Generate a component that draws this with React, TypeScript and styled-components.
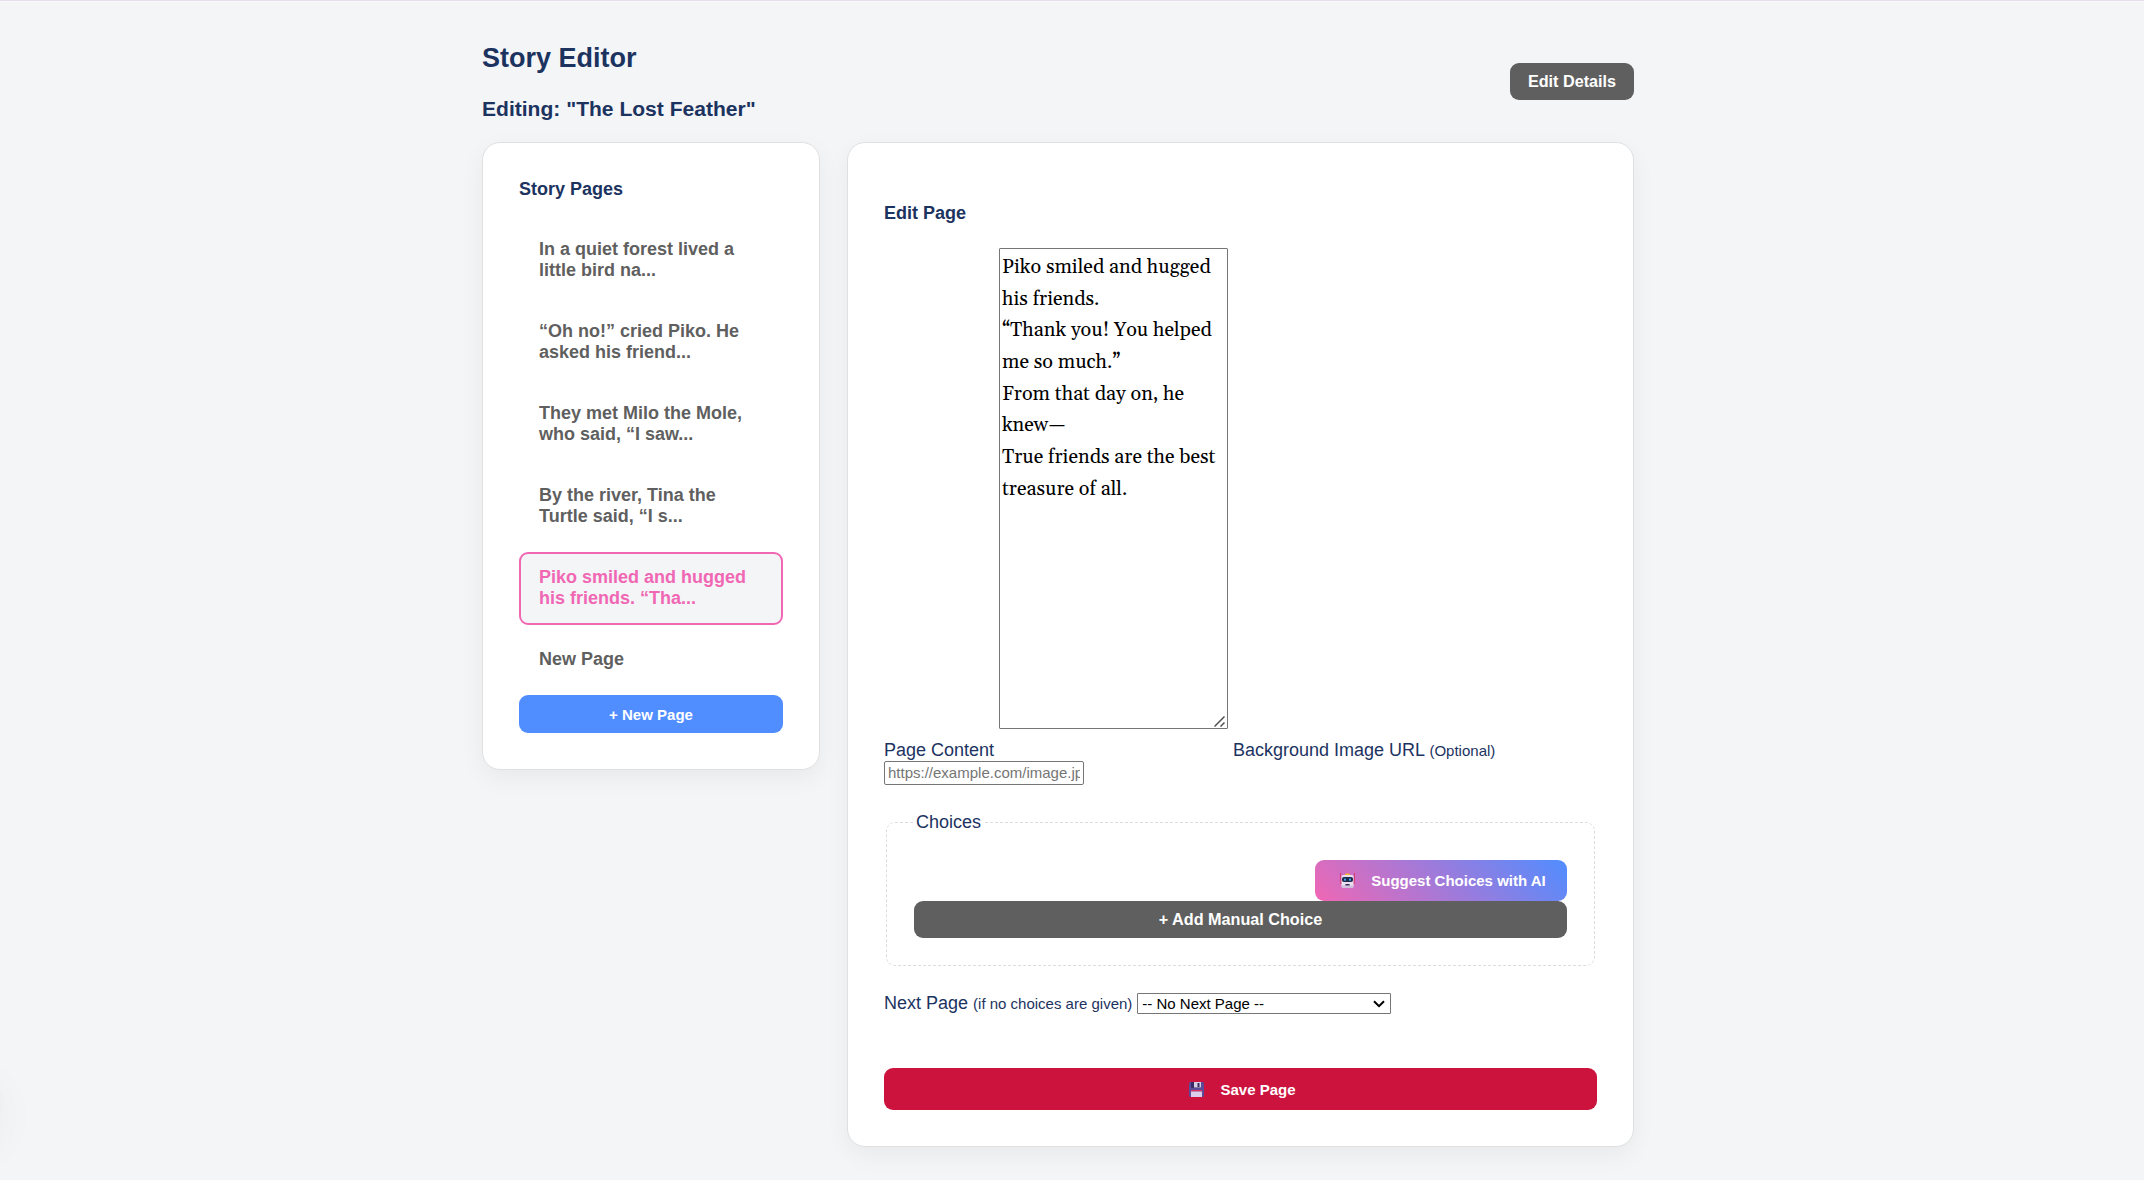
import React from 'react';
import styled, { createGlobalStyle, css } from 'styled-components';

const GlobalStyle = createGlobalStyle`
  *, *::before, *::after { box-sizing: border-box; }
  html, body { margin: 0; }
  body {
    background: #f4f5f7;
    color: #1c335f;
    font-family: Arial, "Liberation Sans", sans-serif;
    font-size: 18px;
    overflow: hidden;
  }
`;

const Page = styled.main`
  height: 1180px;
  border-top: 1px solid #e6dcea;
  box-shadow: inset 0 1px #fafafc;
  overflow: hidden;
`;

const Container = styled.div`
  width: 1152px;
  margin-left: 482px;
`;

const Header = styled.header`
  display: flex;
  justify-content: space-between;
  align-items: center;
  height: 141px;
  padding: 41px 0 21px;
`;

const Title = styled.h2`
  font-size: 27px;
  line-height: 33px;
  margin: 0 0 22px;
`;

const Subtitle = styled.h3`
  font-size: 21.06px;
  line-height: 24px;
  margin: 0;
`;

const Columns = styled.div`
  display: grid;
  grid-template-columns: 338px 787px;
  gap: 27px;
  align-items: start;
`;

const Card = styled.section<{ $top?: number }>`
  background: #fff;
  border: 1px solid #e0e0e0;
  border-radius: 18px;
  padding: ${(p) => p.$top ?? 36}px 36px 36px;
  box-shadow: 0 8px 24px rgba(0, 0, 0, 0.05);
  min-width: 0;
`;

const SectionTitle = styled.h4`
  font-size: 18px;
  line-height: 20px;
  margin: 0;
`;

const PageList = styled.ul`
  list-style: none;
  margin: 25px 0 9px;
  padding: 0;
  display: flex;
  flex-direction: column;
  gap: 9px;
`;

const PageItem = styled.li<{ $active?: boolean }>`
  border: 2px solid transparent;
  border-radius: 9px;
  padding: 13px 18px 14px;
  font-weight: bold;
  line-height: 21px;
  color: #5f5f5f;
  ${(p) =>
    p.$active &&
    css`
      border-color: #f067b4;
      background: #f4f5f7;
      color: #f067b4;
    `}
`;

type Tone = 'grey' | 'blue' | 'red' | 'gradient';
const tones: Record<Tone, string> = {
  grey: '#5f5f5f',
  blue: '#508dff',
  red: '#cc133e',
  gradient: 'linear-gradient(45deg, #f067b4, #508dff)',
};

const Button = styled.button<{ $tone: Tone; $h: number; $w?: string; $size?: number }>`
  display: flex;
  align-items: center;
  justify-content: center;
  width: ${(p) => p.$w ?? '100%'};
  height: ${(p) => p.$h}px;
  padding: 0;
  border: 0;
  border-radius: 9px;
  background: ${(p) => tones[p.$tone]};
  color: #fff;
  font: bold ${(p) => p.$size ?? 15}px Arial, "Liberation Sans", sans-serif;
`;

const Icon = styled.svg`
  width: 15px;
  height: 15px;
  margin: 0 16px 0 4px;
  flex: none;
`;

const Fields = styled.div`
  margin-top: 25px;
  line-height: 20px;
`;

const ContentRow = styled.div`
  display: flex;
  align-items: flex-end;
  height: 513px;
`;

const FieldLabel = styled.label<{ $w?: number }>`
  width: ${(p) => (p.$w ? `${p.$w}px` : 'auto')};
  padding-bottom: 1px;
  white-space: nowrap;
`;

const StoryBox = styled.div`
  position: relative;
  align-self: flex-start;
  width: 229px;
  height: 481px;
  margin-right: 5px;
`;

const Story = styled.textarea`
  display: block;
  width: 100%;
  height: 100%;
  padding: 3px 2px 2px;
  border: 1px solid #767676;
  border-radius: 1px;
  color: #000;
  background: #fff;
  font-family: Georgia, Gelasio, "Liberation Serif", serif;
  font-size: 19.8px;
  line-height: 31.68px;
  white-space: pre;
  overflow: hidden;
  resize: none;
`;

const Grip = styled.svg`
  position: absolute;
  right: 3px;
  bottom: 2px;
  width: 11px;
  height: 11px;
  pointer-events: none;
`;

const Small = styled.small`
  font-size: 15px;
  line-height: 1;
`;

const UrlInput = styled.input`
  display: block;
  width: 200px;
  height: 24px;
  padding: 0 3px 2px;
  border: 1px solid #767676;
  border-radius: 2px;
  font: 15px Arial, "Liberation Sans", sans-serif;
  &::placeholder { color: #757575; }
`;

const Choices = styled.fieldset`
  margin: 27px 2px 0;
  padding: 27px;
  border: 1px dashed #dcdcdc;
  border-radius: 9px;
`;

const Legend = styled.legend`
  padding: 0 2px;
  line-height: 21px;
`;

const SuggestRow = styled.div`
  display: flex;
  justify-content: flex-end;
`;

const NextRow = styled.div`
  display: flex;
  align-items: center;
  height: 21px;
  margin: 27px 0 54px;
  gap: 5px;
`;

const SelectBox = styled.div`
  position: relative;
  width: 254px;
  height: 21px;
`;

const Select = styled.select`
  appearance: none;
  display: block;
  width: 100%;
  height: 100%;
  padding: 0 4px;
  border: 1px solid #767676;
  border-radius: 1px;
  background: #fff;
  color: #000;
  font: 15px Arial, "Liberation Sans", sans-serif;
`;

const Chevron = styled.svg`
  position: absolute;
  right: 6px;
  top: 7px;
  width: 12px;
  height: 8px;
  pointer-events: none;
`;

const FloatingWidget = styled.div`
  position: fixed;
  left: -62px;
  top: 1070px;
  width: 60px;
  height: 60px;
  border-radius: 50%;
  background: #fff;
  box-shadow: 0 2px 16px rgba(0, 0, 0, 0.04), 0 16px 48px rgba(0, 0, 0, 0.06);
`;

const RobotIcon = () => (
  <Icon viewBox="0 0 15 15">
    <path d="M.5 0v10M14.5 0v10" stroke="#d93a72" strokeWidth="1" />
    <path d="M0 7h2v4H0zM13 7h2v4h-2z" fill="#d84a80" />
    <path d="M4.500 2.200C5 .9 6 .5 7.500 .5s2.500.4 3 1.700z" fill="#f5b921" />
    <rect x="1.500" y="2" width="12" height="12.800" rx="1.500" fill="#e8dff0" />
    <path d="M2 12.500h11V14a1 1 0 0 1-1 1H3a1 1 0 0 1-1-1z" fill="#cfc0de" />
    <rect x="2" y="4" width="11" height="5" rx="2" fill="#202b4c" />
    <rect x="4" y="5.500" width="2" height="2.200" rx=".6" fill="#42a5ec" />
    <rect x="9" y="5.500" width="2" height="2.200" rx=".6" fill="#42a5ec" />
    <rect x="5.300" y="11" width="4.400" height="1.600" rx=".5" fill="#3c2c59" />
  </Icon>
);

const FloppyIcon = () => (
  <Icon viewBox="0 0 15 15">
    <path d="M1.500 0h12A1.500 1.500 0 0 1 15 1.500v12a1.500 1.500 0 0 1-1.500 1.500h-12A1.500 1.500 0 0 1 0 13.500v-12A1.500 1.500 0 0 1 1.500 0z" fill="#5b4a99" />
    <path d="M2 0h10v6H3a1 1 0 0 1-1-1z" fill="#3a2b66" />
    <path d="M5 0h7v5.500H5z" fill="#d5cde2" />
    <path d="M8.500 1h2v4h-2z" fill="#3a2b66" />
    <path d="M2 8h11v1.500H2z" fill="#e0315f" />
    <path d="M2 9.500h11V15H2z" fill="#dccdeb" />
  </Icon>
);

const pages = [
  'In a quiet forest lived a little bird na...',
  '“Oh no!” cried Piko. He asked his friend...',
  'They met Milo the Mole, who said, “I saw...',
  'By the river, Tina the Turtle said, “I s...',
  'Piko smiled and hugged his friends. “Tha...',
  'New Page',
];

const story = `Piko smiled and hugged
his friends.
“Thank you! You helped
me so much.”
From that day on, he
knew—
True friends are the best
treasure of all.`;

export default function App() {
  return (
    <>
      <GlobalStyle />
      <Page>
        <Container>
          <Header>
            <div>
              <Title>Story Editor</Title>
              <Subtitle>Editing: "The Lost Feather"</Subtitle>
            </div>
            <Button $tone="grey" $h={37} $w="124px" $size={16.2}>Edit Details</Button>
          </Header>
          <Columns>
            <Card>
              <SectionTitle>Story Pages</SectionTitle>
              <PageList>
                {pages.map((text, i) => (
                  <PageItem key={text} $active={i === 4}>{text}</PageItem>
                ))}
              </PageList>
              <Button $tone="blue" $h={38}>+ New Page</Button>
            </Card>
            <Card $top={60}>
              <SectionTitle>Edit Page</SectionTitle>
              <Fields>
                <ContentRow>
                  <FieldLabel $w={115} htmlFor="content">Page Content</FieldLabel>
                  <StoryBox>
                    <Story id="content" defaultValue={story} spellCheck={false} />
                    <Grip viewBox="0 0 11 11">
                      <path d="M.5 10.500 10.500 .5M6.500 10.500l4-4" stroke="#505050" strokeWidth="1.500" />
                    </Grip>
                  </StoryBox>
                  <FieldLabel htmlFor="background">
                    Background Image URL <Small>(Optional)</Small>
                  </FieldLabel>
                </ContentRow>
                <UrlInput id="background" placeholder="https://example.com/image.jpg" />
              </Fields>
              <Choices>
                <Legend>Choices</Legend>
                <SuggestRow>
                  <Button $tone="gradient" $h={41} $w="252px">
                    <RobotIcon />
                    Suggest Choices with AI
                  </Button>
                </SuggestRow>
                <Button $tone="grey" $h={37} $size={16.2}>+ Add Manual Choice</Button>
              </Choices>
              <NextRow>
                <label htmlFor="next">
                  Next Page <Small>(if no choices are given)</Small>
                </label>
                <SelectBox>
                  <Select id="next">
                    <option>-- No Next Page --</option>
                  </Select>
                  <Chevron viewBox="0 0 12 8">
                    <path d="M1 1.300 6 6.200l5-4.900" fill="none" stroke="#000" strokeWidth="2" />
                  </Chevron>
                </SelectBox>
              </NextRow>
              <Button $tone="red" $h={42}>
                <FloppyIcon />
                Save Page
              </Button>
            </Card>
          </Columns>
        </Container>
        <FloatingWidget />
      </Page>
    </>
  );
}
